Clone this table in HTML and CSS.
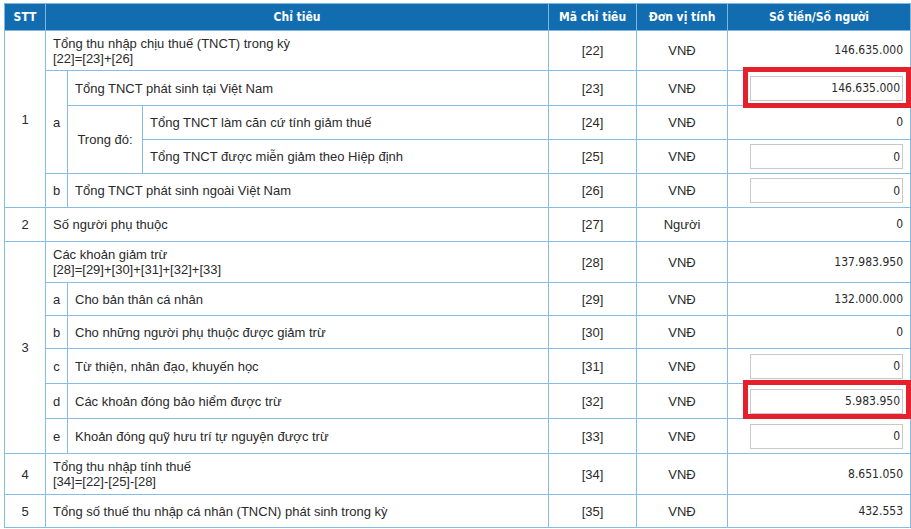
FILE: index.html
```html
<!DOCTYPE html>
<html lang="vi">
<head>
<meta charset="utf-8">
<title>Tờ khai quyết toán thuế TNCN</title>
<link rel="stylesheet" href="styles.css">
</head>
<body>
<div class="wrap">
  <table class="tk">
    <colgroup>
      <col class="c-stt"><col class="c-sub"><col class="c-td"><col class="c-text">
      <col class="c-ma"><col class="c-dv"><col class="c-val">
    </colgroup>
    <thead>
      <tr class="h">
        <th>STT</th>
        <th colspan="3">Chỉ tiêu</th>
        <th>Mã chỉ tiêu</th>
        <th>Đơn vị tính</th>
        <th>Số tiền/Số người</th>
      </tr>
    </thead>
    <tbody>
      <tr class="r40">
        <td class="ctr" rowspan="5">1</td>
        <td colspan="3">Tổng thu nhập chịu thuế (TNCT) trong kỳ<br>[22]=[23]+[26]</td>
        <td class="ctr">[22]</td><td class="ctr">VNĐ</td><td class="num">146.635.000</td>
      </tr>
      <tr class="r35">
        <td class="ctr" rowspan="3">a</td>
        <td colspan="2" class="txt">Tổng TNCT phát sinh tại Việt Nam</td>
        <td class="ctr">[23]</td><td class="ctr">VNĐ</td>
        <td class="num"><input class="inp" type="text" value="146.635.000"></td>
      </tr>
      <tr class="r34">
        <td class="ctr" rowspan="2">Trong đó:</td>
        <td class="txt">Tổng TNCT làm căn cứ tính giảm thuế</td>
        <td class="ctr">[24]</td><td class="ctr">VNĐ</td><td class="num">0</td>
      </tr>
      <tr class="r34">
        <td class="txt">Tổng TNCT được miễn giảm theo Hiệp định</td>
        <td class="ctr">[25]</td><td class="ctr">VNĐ</td>
        <td class="num"><input class="inp" type="text" value="0"></td>
      </tr>
      <tr class="r34">
        <td class="ctr">b</td>
        <td colspan="2" class="txt">Tổng TNCT phát sinh ngoài Việt Nam</td>
        <td class="ctr">[26]</td><td class="ctr">VNĐ</td>
        <td class="num"><input class="inp" type="text" value="0"></td>
      </tr>
      <tr class="r34">
        <td class="ctr">2</td>
        <td colspan="3">Số người phụ thuộc</td>
        <td class="ctr">[27]</td><td class="ctr">Người</td><td class="num">0</td>
      </tr>
      <tr class="r41">
        <td class="ctr" rowspan="6">3</td>
        <td colspan="3">Các khoản giảm trừ<br>[28]=[29]+[30]+[31]+[32]+[33]</td>
        <td class="ctr">[28]</td><td class="ctr">VNĐ</td><td class="num">137.983.950</td>
      </tr>
      <tr class="r33">
        <td class="ctr">a</td>
        <td colspan="2" class="txt">Cho bản thân cá nhân</td>
        <td class="ctr">[29]</td><td class="ctr">VNĐ</td><td class="num">132.000.000</td>
      </tr>
      <tr class="r33">
        <td class="ctr">b</td>
        <td colspan="2" class="txt">Cho những người phụ thuộc được giảm trừ</td>
        <td class="ctr">[30]</td><td class="ctr">VNĐ</td><td class="num">0</td>
      </tr>
      <tr class="r35">
        <td class="ctr">c</td>
        <td colspan="2" class="txt">Từ thiện, nhân đạo, khuyến học</td>
        <td class="ctr">[31]</td><td class="ctr">VNĐ</td>
        <td class="num"><input class="inp" type="text" value="0"></td>
      </tr>
      <tr class="r35">
        <td class="ctr">d</td>
        <td colspan="2" class="txt">Các khoản đóng bảo hiểm được trừ</td>
        <td class="ctr">[32]</td><td class="ctr">VNĐ</td>
        <td class="num"><input class="inp" type="text" value="5.983.950"></td>
      </tr>
      <tr class="r35">
        <td class="ctr">e</td>
        <td colspan="2" class="txt">Khoản đóng quỹ hưu trí tự nguyện được trừ</td>
        <td class="ctr">[33]</td><td class="ctr">VNĐ</td>
        <td class="num"><input class="inp" type="text" value="0"></td>
      </tr>
      <tr class="r41">
        <td class="ctr">4</td>
        <td colspan="3">Tổng thu nhập tính thuế<br>[34]=[22]-[25]-[28]</td>
        <td class="ctr">[34]</td><td class="ctr">VNĐ</td><td class="num">8.651.050</td>
      </tr>
      <tr class="r33">
        <td class="ctr">5</td>
        <td colspan="3">Tổng số thuế thu nhập cá nhân (TNCN) phát sinh trong kỳ</td>
        <td class="ctr">[35]</td><td class="ctr">VNĐ</td><td class="num">432.553</td>
      </tr>
    </tbody>
  </table>
  <div class="mark mark-1"></div>
  <div class="mark mark-2"></div>
</div>
</body>
</html>
```

FILE: styles.css
```css
html, body {
  margin: 0;
  padding: 0;
  background: #ffffff;
}

.wrap {
  position: relative;
  padding: 3px 0 0 4px;
}

.tk {
  border-collapse: collapse;
  table-layout: fixed;
  width: 906px;
  font-family: "Liberation Sans", Arial, sans-serif;
  font-size: 13px;
  color: #2a2a2a;
}

.c-stt { width: 41px; }
.c-sub { width: 22px; }
.c-td { width: 75px; }
.c-text { width: 406px; }
.c-ma { width: 88px; }
.c-dv { width: 91px; }
.c-val { width: 183px; }

.tk th,
.tk td {
  border: 1px solid #86bde3;
  line-height: 15px;
  vertical-align: middle;
}

.tk th {
  background: #116cb0;
  color: #ffffff;
  font-family: "DejaVu Sans Condensed", "DejaVu Sans", sans-serif;
  font-stretch: condensed;
  font-weight: bold;
  font-size: 12px;
  text-align: center;
  padding: 0 4px;
  border-color: #7fb6de;
}

.h { height: 27px; }

.tk td {
  padding: 0 7px;
  text-align: left;
}

.tk td.txt { padding-left: 7px; }

.tk td.ctr { text-align: center; padding: 0 2px; }

.tk td.num {
  text-align: right;
  padding: 0 7px 0 4px;
  font-family: "DejaVu Sans Condensed", "DejaVu Sans", sans-serif;
  font-stretch: condensed;
  font-size: 12px;
}

.r33 { height: 33px; }
.r34 { height: 34px; }
.r35 { height: 35px; }
.r40 { height: 40px; }
.r41 { height: 41px; }

.inp {
  box-sizing: border-box;
  width: 153px;
  height: 25px;
  margin: 0;
  padding: 0 2px 0 2px;
  border: 1px solid #c9c9c9;
  background: #ffffff;
  font-family: "DejaVu Sans Condensed", "DejaVu Sans", sans-serif;
  font-stretch: condensed;
  font-size: 12px;
  color: #2a2a2a;
  text-align: right;
  display: block;
  margin-left: auto;
  outline: none;
}

.mark {
  position: absolute;
  border: 5px solid #e3202b;
  box-sizing: border-box;
}

.mark-1 { left: 743px; top: 67px; width: 168px; height: 41px; }
.mark-2 { left: 743px; top: 380px; width: 168px; height: 39px; }
```
